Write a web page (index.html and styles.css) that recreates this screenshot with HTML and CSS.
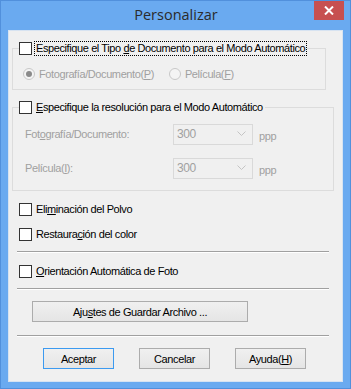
FILE: index.html
```html
<!DOCTYPE html>
<html lang="es">
<head>
    <meta charset="UTF-8">
    <title>Personalizar</title>
    <link rel="stylesheet" href="styles.css">
</head>
<body>
    <div class="window">
        <!-- Barra de título -->
        <div class="titlebar">
            <span></span>
            <span class="title">Personalizar</span>
            <span class="close">
                <svg width="10" height="9" viewBox="0 0 10 9">
                    <path d="M1 0.5 L9 8.5 M9 0.5 L1 8.5" stroke="#fff" stroke-width="2"/>
                </svg>
            </span>
        </div>

        <div class="client">
            <!-- Tipo de documento -->
            <fieldset class="group group-type">
                <legend>
                    <label class="check focus">
                        <input type="checkbox">
                        <span class="text">Especifique el Tipo <u>d</u>e Documento para el Modo Automático</span>
                    </label>
                </legend>
                <div class="radio-row">
                    <label class="radio disabled">
                        <span class="dot checked"></span>
                        <span>Fotografía/Documento(<u>P</u>)</span>
                    </label>
                    <label class="radio disabled">
                        <span class="dot"></span>
                        <span>Película(<u>F</u>)</span>
                    </label>
                </div>
            </fieldset>

            <!-- Resolución -->
            <fieldset class="group group-res">
                <legend>
                    <label class="check">
                        <input type="checkbox">
                        <span class="text"><u>E</u>specifique la resolución para el Modo Automático</span>
                    </label>
                </legend>
                <div class="res-row">
                    <span class="res-label">Fot<u>o</u>grafía/Documento:</span>
                    <div class="combo">
                        <span>300</span>
                        <svg width="9" height="6" viewBox="0 0 9 6">
                            <path d="M0.5 0.5 L4.5 4.5 L8.5 0.5" stroke="#c4c4c4" fill="none"/>
                        </svg>
                    </div>
                    <span class="unit">ppp</span>
                </div>
                <div class="res-row">
                    <span class="res-label">Película(<u>I</u>):</span>
                    <div class="combo">
                        <span>300</span>
                        <svg width="9" height="6" viewBox="0 0 9 6">
                            <path d="M0.5 0.5 L4.5 4.5 L8.5 0.5" stroke="#c4c4c4" fill="none"/>
                        </svg>
                    </div>
                    <span class="unit">ppp</span>
                </div>
            </fieldset>

            <label class="check option first">
                <input type="checkbox">
                <span class="text">Eli<u>m</u>inación del Polvo</span>
            </label>
            <label class="check option">
                <input type="checkbox">
                <span class="text">Restaura<u>c</u>ión del color</span>
            </label>

            <hr class="sep">

            <label class="check option">
                <input type="checkbox">
                <span class="text"><u>O</u>rientación Automática de Foto</span>
            </label>

            <hr class="sep">

            <button class="btn btn-save">Aju<u>s</u>tes de Guardar Archivo ...</button>

            <hr class="sep">

            <div class="actions">
                <button class="btn default">Aceptar</button>
                <button class="btn">Cancelar</button>
                <button class="btn">Ayuda(<u>H</u>)</button>
            </div>
        </div>
    </div>
</body>
</html>
```

FILE: styles.css
```css
/* Общие стили */
body {
    margin: 0;
    font-family: "Liberation Sans", Arial, sans-serif;
    font-size: 11px;
    letter-spacing: -0.4px;
    color: #000;
}
u {
    text-decoration: underline;
    text-underline-offset: 1px;
}
/* Окно */
.window {
    width: 351px;
    height: 389px;
    box-sizing: border-box;
    background-color: #6aaaf0;
    border: 1px solid #5190dc;
    display: flex;
    flex-direction: column;
    padding: 0 7px 6px 7px;
}
/* Заголовок */
.titlebar {
    height: 29px;
    display: grid;
    grid-template-columns: 1fr auto 1fr;
    align-items: start;
    margin: 0 -1px 0 0;
}
.title {
    font-family: "Open Sans", "Noto Sans", sans-serif;
    font-size: 14.5px;
    letter-spacing: 0;
    color: #2b2b2b;
    line-height: 28px;
}
.close {
    justify-self: end;
    width: 30px;
    height: 19px;
    background-color: #c75050;
    display: flex;
    align-items: center;
    justify-content: center;
}
/* Клиентская область */
.client {
    flex: 1;
    background-color: #f0f0f0;
    border: 1px solid #d7e3f1;
    padding: 0;
    display: flex;
    flex-direction: column;
    align-items: flex-start;
}
/* Группы */
.group {
    margin: 11px 0 0 3px;
    padding: 0;
    border: 1px solid #dcdcdc;
    box-sizing: border-box;
    min-width: 0;
}
.group legend {
    margin-left: 6px;
    padding: 0;
    height: 13px;
}
.group-type {
    width: 314px;
    height: 48px;
}
.group-res {
    width: 322px;
    height: 90px;
    margin-top: 11px;
}
/* Чекбоксы */
.check {
    display: flex;
    align-items: center;
    height: 13px;
}
.check input {
    appearance: none;
    -webkit-appearance: none;
    margin: 0;
    width: 13px;
    height: 13px;
    border: 1px solid #333;
    background-color: #fff;
    box-sizing: border-box;
    flex: none;
}
.check .text {
    margin-left: 2px;
    padding: 0 1px;
    line-height: 13px;
    border: 1px dotted transparent;
    white-space: nowrap;
}
.check.focus .text {
    border-color: #000;
}
/* Радиокнопки */
.radio-row {
    display: flex;
    margin: 12px 0 0 10px;
}
.radio {
    display: flex;
    align-items: center;
    height: 13px;
    margin-right: 15px;
}
.disabled {
    color: #a0a0a0;
}
.dot {
    width: 12px;
    height: 12px;
    box-sizing: border-box;
    border: 1px solid #c8c8c8;
    border-radius: 50%;
    background-color: #f4f4f4;
    margin-right: 4px;
    display: flex;
    align-items: center;
    justify-content: center;
}
.dot.checked::after {
    content: "";
    width: 6px;
    height: 6px;
    border-radius: 50%;
    background-color: #8a8a8a;
}
/* Разрешение */
.res-row {
    display: flex;
    align-items: center;
    margin-left: 12px;
    height: 22px;
    margin-top: 12px;
    color: #a0a0a0;
}
.group-res .res-row:first-of-type {
    margin-top: 9px;
}
.res-label {
    width: 148px;
}
.combo {
    width: 80px;
    height: 21px;
    box-sizing: border-box;
    border: 1px solid #d9d9d9;
    display: flex;
    align-items: center;
    justify-content: space-between;
    padding: 0 6px 0 3px;
    font-size: 12px;
}
.unit {
    margin: 4px 0 0 6px;
}
/* Опции */
.option {
    margin-left: 10px;
    margin-top: 12px;
}
.sep {
    width: 312px;
    margin: 11px 0 0 8px;
    border: none;
    border-top: 1px solid #a0a0a0;
    border-bottom: 1px solid #fff;
    height: 0;
}
.sep + .option {
    margin-top: 12px;
}
.option + .sep {
    margin-top: 10px;
}
/* Кнопки */
.btn {
    font-family: "Liberation Sans", Arial, sans-serif;
    font-size: 11px;
    letter-spacing: -0.4px;
    height: 21px;
    width: 71px;
    border: 1px solid #acacac;
    background: linear-gradient(#f0f0f0, #e5e5e5);
    color: #000;
    padding: 0;
}
.btn.default {
    border-color: #3c9af0;
}
.btn-save {
    width: 216px;
    margin: 11px 0 0 23px;
}
.btn-save + .sep {
    margin-top: 13px;
}
.actions {
    display: flex;
    gap: 25px;
    margin: 11px 0 0 34px;
}
```
